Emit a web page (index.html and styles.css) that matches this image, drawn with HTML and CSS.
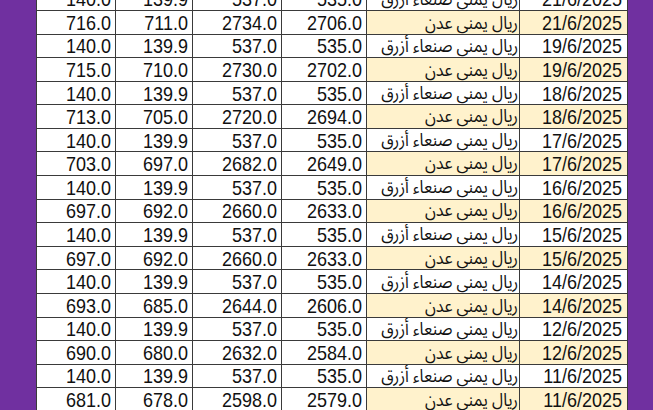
FILE: index.html
```html
<!DOCTYPE html>
<html lang="ar">
<head>
<meta charset="utf-8">
<link rel="stylesheet" href="styles.css">
</head>
<body>
<div class="page">
  <div class="side side-left"></div>
  <div class="sheet">
    <div class="cell num"><span class="t">140.0</span></div><div class="cell num"><span class="t">139.9</span></div><div class="cell num"><span class="t">537.0</span></div><div class="cell num"><span class="t">535.0</span></div><div class="cell cur"><span class="t">ريال يمني صنعاء أزرق</span></div><div class="cell date"><span class="t">21/6/2025</span></div>
    <div class="cell num"><span class="t">716.0</span></div><div class="cell num"><span class="t">711.0</span></div><div class="cell num"><span class="t">2734.0</span></div><div class="cell num"><span class="t">2706.0</span></div><div class="cell cur hl"><span class="t">ريال يمني عدن</span></div><div class="cell date hl"><span class="t">21/6/2025</span></div>
    <div class="cell num"><span class="t">140.0</span></div><div class="cell num"><span class="t">139.9</span></div><div class="cell num"><span class="t">537.0</span></div><div class="cell num"><span class="t">535.0</span></div><div class="cell cur"><span class="t">ريال يمني صنعاء أزرق</span></div><div class="cell date"><span class="t">19/6/2025</span></div>
    <div class="cell num"><span class="t">715.0</span></div><div class="cell num"><span class="t">710.0</span></div><div class="cell num"><span class="t">2730.0</span></div><div class="cell num"><span class="t">2702.0</span></div><div class="cell cur hl"><span class="t">ريال يمني عدن</span></div><div class="cell date hl"><span class="t">19/6/2025</span></div>
    <div class="cell num"><span class="t">140.0</span></div><div class="cell num"><span class="t">139.9</span></div><div class="cell num"><span class="t">537.0</span></div><div class="cell num"><span class="t">535.0</span></div><div class="cell cur"><span class="t">ريال يمني صنعاء أزرق</span></div><div class="cell date"><span class="t">18/6/2025</span></div>
    <div class="cell num"><span class="t">713.0</span></div><div class="cell num"><span class="t">705.0</span></div><div class="cell num"><span class="t">2720.0</span></div><div class="cell num"><span class="t">2694.0</span></div><div class="cell cur hl"><span class="t">ريال يمني عدن</span></div><div class="cell date hl"><span class="t">18/6/2025</span></div>
    <div class="cell num"><span class="t">140.0</span></div><div class="cell num"><span class="t">139.9</span></div><div class="cell num"><span class="t">537.0</span></div><div class="cell num"><span class="t">535.0</span></div><div class="cell cur"><span class="t">ريال يمني صنعاء أزرق</span></div><div class="cell date"><span class="t">17/6/2025</span></div>
    <div class="cell num"><span class="t">703.0</span></div><div class="cell num"><span class="t">697.0</span></div><div class="cell num"><span class="t">2682.0</span></div><div class="cell num"><span class="t">2649.0</span></div><div class="cell cur hl"><span class="t">ريال يمني عدن</span></div><div class="cell date hl"><span class="t">17/6/2025</span></div>
    <div class="cell num"><span class="t">140.0</span></div><div class="cell num"><span class="t">139.9</span></div><div class="cell num"><span class="t">537.0</span></div><div class="cell num"><span class="t">535.0</span></div><div class="cell cur"><span class="t">ريال يمني صنعاء أزرق</span></div><div class="cell date"><span class="t">16/6/2025</span></div>
    <div class="cell num"><span class="t">697.0</span></div><div class="cell num"><span class="t">692.0</span></div><div class="cell num"><span class="t">2660.0</span></div><div class="cell num"><span class="t">2633.0</span></div><div class="cell cur hl"><span class="t">ريال يمني عدن</span></div><div class="cell date hl"><span class="t">16/6/2025</span></div>
    <div class="cell num"><span class="t">140.0</span></div><div class="cell num"><span class="t">139.9</span></div><div class="cell num"><span class="t">537.0</span></div><div class="cell num"><span class="t">535.0</span></div><div class="cell cur"><span class="t">ريال يمني صنعاء أزرق</span></div><div class="cell date"><span class="t">15/6/2025</span></div>
    <div class="cell num"><span class="t">697.0</span></div><div class="cell num"><span class="t">692.0</span></div><div class="cell num"><span class="t">2660.0</span></div><div class="cell num"><span class="t">2633.0</span></div><div class="cell cur hl"><span class="t">ريال يمني عدن</span></div><div class="cell date hl"><span class="t">15/6/2025</span></div>
    <div class="cell num"><span class="t">140.0</span></div><div class="cell num"><span class="t">139.9</span></div><div class="cell num"><span class="t">537.0</span></div><div class="cell num"><span class="t">535.0</span></div><div class="cell cur"><span class="t">ريال يمني صنعاء أزرق</span></div><div class="cell date"><span class="t">14/6/2025</span></div>
    <div class="cell num"><span class="t">693.0</span></div><div class="cell num"><span class="t">685.0</span></div><div class="cell num"><span class="t">2644.0</span></div><div class="cell num"><span class="t">2606.0</span></div><div class="cell cur hl"><span class="t">ريال يمني عدن</span></div><div class="cell date hl"><span class="t">14/6/2025</span></div>
    <div class="cell num"><span class="t">140.0</span></div><div class="cell num"><span class="t">139.9</span></div><div class="cell num"><span class="t">537.0</span></div><div class="cell num"><span class="t">535.0</span></div><div class="cell cur"><span class="t">ريال يمني صنعاء أزرق</span></div><div class="cell date"><span class="t">12/6/2025</span></div>
    <div class="cell num"><span class="t">690.0</span></div><div class="cell num"><span class="t">680.0</span></div><div class="cell num"><span class="t">2632.0</span></div><div class="cell num"><span class="t">2584.0</span></div><div class="cell cur hl"><span class="t">ريال يمني عدن</span></div><div class="cell date hl"><span class="t">12/6/2025</span></div>
    <div class="cell num"><span class="t">140.0</span></div><div class="cell num"><span class="t">139.9</span></div><div class="cell num"><span class="t">537.0</span></div><div class="cell num"><span class="t">535.0</span></div><div class="cell cur"><span class="t">ريال يمني صنعاء أزرق</span></div><div class="cell date"><span class="t">11/6/2025</span></div>
    <div class="cell num"><span class="t">681.0</span></div><div class="cell num"><span class="t">678.0</span></div><div class="cell num"><span class="t">2598.0</span></div><div class="cell num"><span class="t">2579.0</span></div><div class="cell cur hl"><span class="t">ريال يمني عدن</span></div><div class="cell date hl"><span class="t">11/6/2025</span></div>
  </div>
  <div class="side side-right"></div>
</div>
</body>
</html>
```
FILE: styles.css
```css
html, body {
  margin: 0;
  padding: 0;
  width: 653px;
  height: 410px;
  overflow: hidden;
  background: #7030a0;
}
.page {
  display: flex;
  align-items: flex-start;
  height: 410px;
  overflow: hidden;
}
.side-left {
  width: 36px;
  flex: none;
}
.side-right {
  flex: 1;
}
.sheet {
  flex: none;
  width: 591px;
  margin-top: -12.6px;
  display: grid;
  grid-template-columns: 79px 77px 89px 85px 153px 108px;
  grid-auto-rows: 23.58px;
  background: #ffffff;
  border-left: 1px solid #3a3a3a;
  box-sizing: border-box;
  font-family: "Liberation Sans", "DejaVu Sans", sans-serif;
  font-size: 18px;
  color: #111;
}
.cell {
  display: flex;
  align-items: center;
  justify-content: flex-end;
  border-right: 1px solid #3a3a3a;
  border-bottom: 1px solid #3a3a3a;
  padding-right: 4px;
  padding-top: 1px;
  box-sizing: border-box;
  overflow: hidden;
  white-space: nowrap;
  line-height: 1;
  background: #ffffff;
}
.t {
  display: inline-block;
  transform: scaleY(1.1);
}
.cur {
  direction: rtl;
  justify-content: flex-start;
  padding-right: 1px;
  font-size: 16px;
  font-family: "Noto Sans Arabic", "Noto Naskh Arabic", "DejaVu Sans", sans-serif;
}
.date {
  padding-right: 5px;
}
.hl {
  background: #fff2cc;
}
```
